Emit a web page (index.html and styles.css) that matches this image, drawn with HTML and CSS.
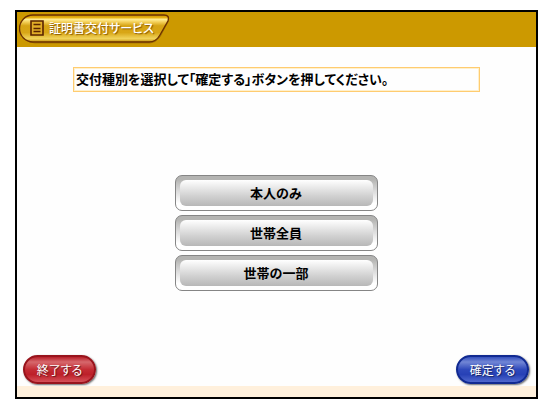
FILE: index.html
```html
<!DOCTYPE html>
<html lang="ja">
<head>
    <meta charset="UTF-8">
    <meta name="viewport" content="width=device-width, initial-scale=1.0">
    <title>証明書交付サービス</title>
    <link rel="stylesheet" href="styles.css">
</head>
<body>
    <div class="screen">
        <!-- Header -->
        <header class="header">
            <div class="badge">
                <svg class="badge-shape" viewBox="0 0 152 30" preserveAspectRatio="none" aria-hidden="true">
                    <defs>
                        <linearGradient id="gold" x1="0" y1="0" x2="0" y2="1">
                            <stop offset="0" stop-color="#c48c00"/>
                            <stop offset="0.1" stop-color="#e8b414"/>
                            <stop offset="0.16" stop-color="#ffee96"/>
                            <stop offset="0.26" stop-color="#f3cf58"/>
                            <stop offset="0.4" stop-color="#d6a414"/>
                            <stop offset="0.65" stop-color="#d8a616"/>
                            <stop offset="0.88" stop-color="#f1d45c"/>
                            <stop offset="1" stop-color="#c08a00"/>
                        </linearGradient>
                    </defs>
                    <path d="M15 2H145Q151 2 149 7L141 22Q137 28 131 28H15A13 13 0 0 1 15 2Z" transform="translate(1 1)" fill="none" stroke="#a87800" stroke-width="1"/>
                    <path d="M14 1H146Q152 1 150 7L142 21Q138 28 131 28H14A13.5 13.5 0 0 1 14 1Z" fill="url(#gold)" stroke="#6b3000" stroke-width="1.4"/>
                </svg>
                <svg class="badge-icon" viewBox="0 0 16 16" aria-hidden="true">
                    <path d="M2 1H14V15H2Z" fill="#e1ad27" stroke="#5a2300" stroke-width="1.6"/>
                    <path d="M4.5 4.5H11.5M4.5 8.5H11.5M4.5 11.5H11.5" stroke="#5a2300" stroke-width="1.4"/>
                </svg>
                <h1 class="badge-title">証明書交付サービス</h1>
            </div>
        </header>

        <!-- Main Content -->
        <main class="content">
            <p class="message">交付種別を選択して「確定する」ボタンを押してください。</p>

            <div class="menu">
                <button type="button" class="menu-btn"><span class="menu-label">本人のみ</span></button>
                <button type="button" class="menu-btn"><span class="menu-label">世帯全員</span></button>
                <button type="button" class="menu-btn"><span class="menu-label">世帯の一部</span></button>
            </div>

            <div class="actions">
                <button type="button" class="action-btn action-exit">終了する</button>
                <button type="button" class="action-btn action-confirm">確定する</button>
            </div>
        </main>

        <footer class="footer"></footer>
    </div>
</body>
</html>
```

FILE: styles.css
```css
/* Base Reset */
* {
    margin: 0;
    padding: 0;
    box-sizing: border-box;
}

body {
    font-family: "Noto Sans CJK JP", sans-serif;
    font-size: 13px;
    background-color: #fff;
    color: #000;
    min-height: 100vh;
    padding: 10px 15px;
    display: flex;
}

.screen {
    flex: 1;
    display: flex;
    flex-direction: column;
    border: 2px solid #000;
    background-color: #fefefe;
}

/* Header */
.header {
    height: 35px;
    padding: 2px;
    background-color: #c90;
}

.badge {
    position: relative;
    display: inline-flex;
    align-items: center;
    gap: 4px;
    height: 30px;
    padding: 0 16px 2px 10px;
}

.badge-shape {
    position: absolute;
    inset: 0;
    width: 100%;
    height: 100%;
}

.badge-icon {
    position: relative;
    width: 16px;
    height: 16px;
}

.badge-title {
    position: relative;
    font-size: 12px;
    font-weight: 500;
    line-height: 16px;
    color: #fff;
    text-shadow: 1px 1px 1px #8a5a00;
    font-feature-settings: "palt";
}

/* Content */
.content {
    flex: 1;
    display: flex;
    flex-direction: column;
    padding: 20px 7px 2px 6px;
}

.message {
    margin: 0 49px 0 50px;
    padding: 1px 2px 2px;
    border: 1px solid #ffcc70;
    box-shadow: inset 0 0 0 1px #fff0cc;
    font-weight: 700;
    line-height: 20px;
    font-feature-settings: "palt";
}

.menu {
    display: flex;
    flex-direction: column;
    align-items: center;
    gap: 4px;
    margin: auto 0;
    padding-top: 18px;
}

.menu-btn {
    display: flex;
    width: 40%;
    min-width: 203px;
    height: 36px;
    padding: 4px;
    border: 1px solid #858585;
    border-radius: 7px;
    background: linear-gradient(#b4b4b2 10%, #dcdcdc 45%, #fff 80%);
    font: inherit;
    font-weight: 700;
    color: #000;
    cursor: pointer;
}

.menu-label {
    flex: 1;
    border-radius: 6px;
    background: linear-gradient(#fff, #ececec 25%, #d2d2d2 60%, #b8b8b8);
    line-height: 26px;
}

/* Action Buttons */
.actions {
    display: flex;
    justify-content: space-between;
}

.action-btn {
    width: 73px;
    height: 29px;
    border: 2px solid;
    border-radius: 15px;
    font: inherit;
    font-size: 12px;
    font-weight: 400;
    line-height: 20px;
    color: #fff;
    text-shadow: 1px 1px 1px rgba(0, 0, 0, 0.5);
    box-shadow: 1px 1px 2px rgba(0, 0, 0, 0.6);
    font-feature-settings: "palt";
    cursor: pointer;
}

.action-exit {
    border-color: #98141c;
    background: linear-gradient(#b8202a, #d6686c 20%, #c42c34 50%, #bd2029 70%, #d65058);
}

.action-confirm {
    border-color: #112a91;
    background: linear-gradient(#3550bd, #7186d5 20%, #2f49bb 50%, #2741b6 70%, #5068cd);
}

/* Footer */
.footer {
    height: 11px;
    background-color: #fff0dc;
}
```
